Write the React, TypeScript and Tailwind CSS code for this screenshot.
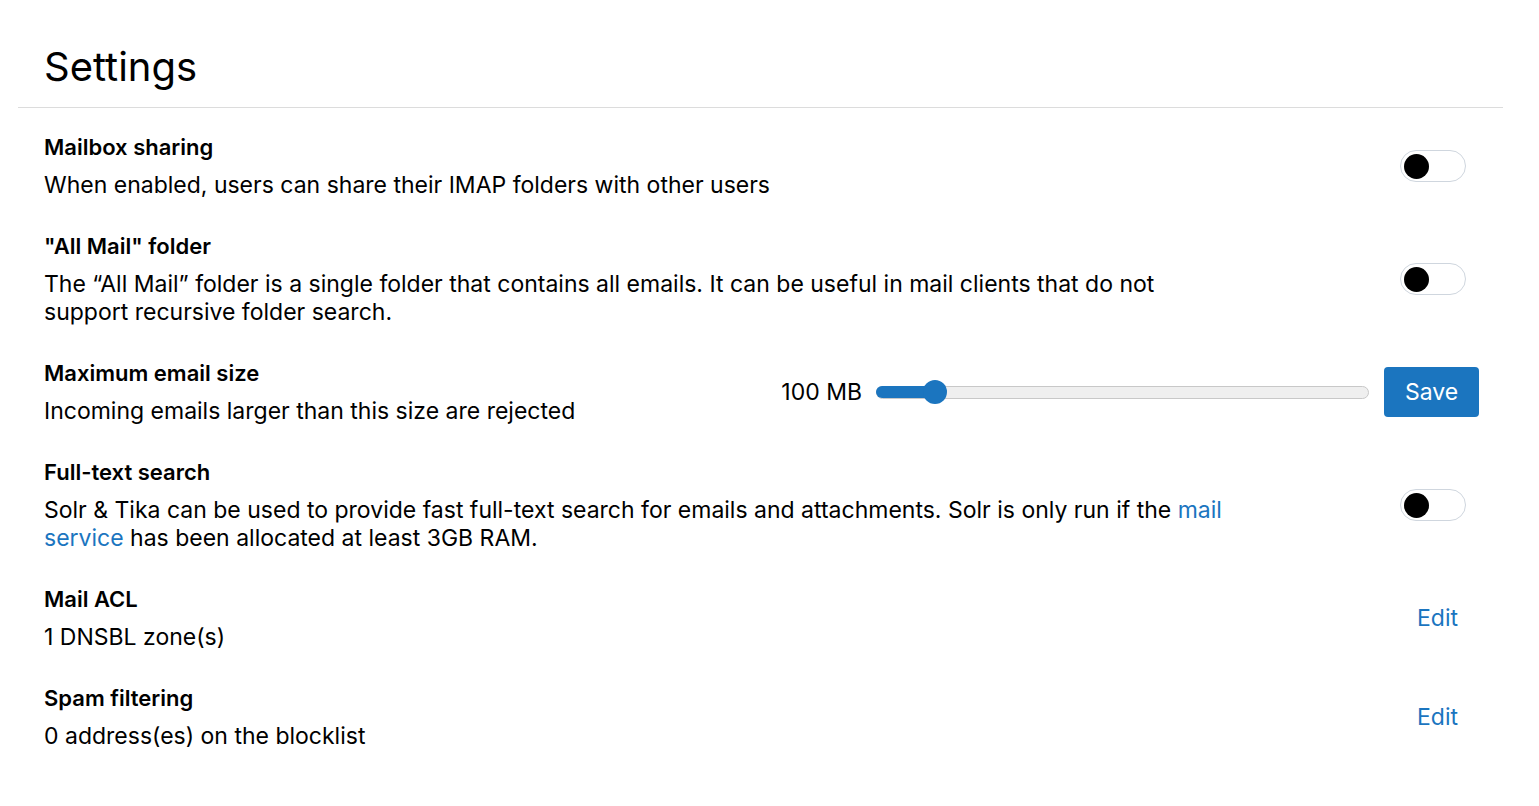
import React from "react";

function Toggle({ mr }: { mr: string }) {
  return (
    <div className={"flex h-[32px] w-[66px] items-center rounded-full border border-[#cfd6de] bg-white px-[3px] " + mr}>
      <div className="h-[25px] w-[25px] rounded-full bg-black" />
    </div>
  );
}

function Row({
  title,
  children,
  control,
}: {
  title: string;
  children: React.ReactNode;
  control: React.ReactNode;
}) {
  return (
    <div className="flex items-center justify-between pl-[26px] pr-[24px]">
      <div className="flex w-[1188px] flex-col gap-[10px]">
        <div className="text-[22px] font-semibold leading-[28px] text-black">{title}</div>
        <div className="text-[23px] leading-[28px] text-black">{children}</div>
      </div>
      <div className="flex w-[95px] justify-end">{control}</div>
    </div>
  );
}

export default function App() {
  return (
    <div
      className="min-h-screen bg-white text-black"
      style={{ fontFamily: "Inter, 'Noto Sans', sans-serif" }}
    >
      <div className="ml-[18px] w-[1485px]">
        <div className="border-b border-[#dcdcdc] pb-[16px] pl-[26px] pt-[43px]">
          <h1 className="text-[40px] font-normal leading-[48px]">Settings</h1>
        </div>
        <div className="mt-[25px] flex flex-col gap-[33px]">
          <Row title="Mailbox sharing" control={<Toggle mr="mr-[13px]" />}>
            When enabled, users can share their IMAP folders with other users
          </Row>
          <Row title={'"All Mail" folder'} control={<Toggle mr="mr-[13px]" />}>
            The “All Mail” folder is a single folder that contains all emails. It can be useful in mail clients that do not support recursive folder search.
          </Row>
          <div className="flex items-center justify-between pl-[26px] pr-[24px]">
            <div className="flex flex-col gap-[10px]">
              <div className="text-[22px] font-semibold leading-[28px]">Maximum email size</div>
              <div className="text-[23px] leading-[28px]">Incoming emails larger than this size are rejected</div>
            </div>
            <div className="flex items-center">
              <span className="mr-[14px] text-[23px] leading-[28px]">100 MB</span>
              <div className="relative flex h-[24px] w-[493px] items-center">
                <div className="h-[13px] w-full rounded-full border border-[#c8c8c8] bg-[#efefef]" />
                <div className="absolute left-0 top-[6px] h-[12px] w-[60px] rounded-l-full bg-[#1b75bf]" />
                <div className="absolute left-[47px] top-0 h-[24px] w-[24px] rounded-full bg-[#1b75bf]" />
              </div>
              <button className="ml-[15px] h-[50px] w-[95px] rounded-[4px] bg-[#1b75bf] text-[23px] text-white">
                Save
              </button>
            </div>
          </div>
          <Row title="Full-text search" control={<Toggle mr="mr-[13px]" />}>
            Solr &amp; Tika can be used to provide fast full-text search for emails and attachments. Solr is only run if the{" "}
            <a className="text-[#1b75bf]">mail service</a> has been allocated at least 3GB RAM.
          </Row>
          <Row
            title="Mail ACL"
            control={<a className="mr-[21px] text-[23px] leading-[28px] text-[#1b75bf]">Edit</a>}
          >
            1 DNSBL zone(s)
          </Row>
          <Row
            title="Spam filtering"
            control={<a className="mr-[21px] text-[23px] leading-[28px] text-[#1b75bf]">Edit</a>}
          >
            0 address(es) on the blocklist
          </Row>
        </div>
      </div>
    </div>
  );
}
